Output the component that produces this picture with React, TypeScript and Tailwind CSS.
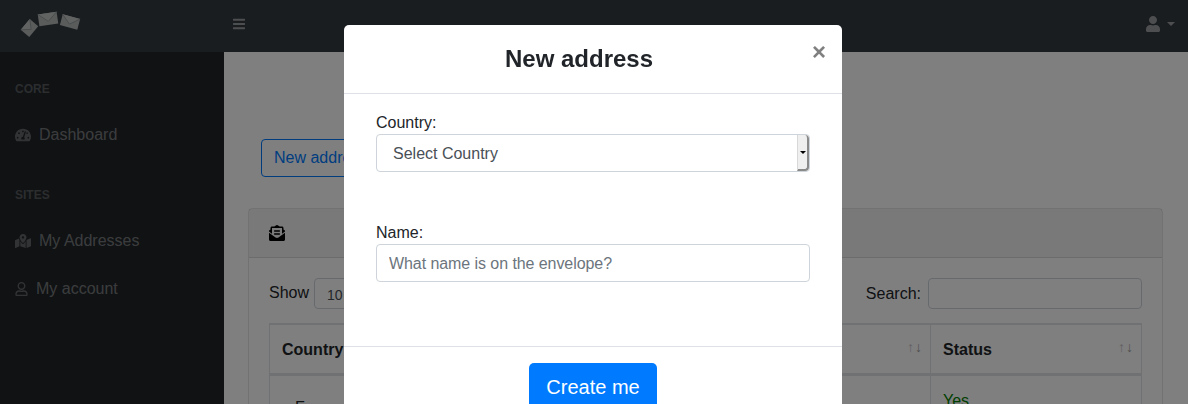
import { FaBars, FaEnvelopeOpenText, FaMapMarkedAlt, FaRegUser, FaTachometerAlt, FaUser } from 'react-icons/fa'

function Logo() {
  const envelopes = [
    { x: 29.5, y: 28, w: 14, h: 11, r: -50 },
    { x: 48, y: 19, w: 19, h: 12, r: -8 },
    { x: 70, y: 22, w: 18, h: 11, r: 15 },
  ]
  return (
    <svg width="100" height="52" viewBox="0 0 100 52" className="absolute left-0 top-0">
      {envelopes.map((e) => (
        <g key={e.x} transform={`translate(${e.x} ${e.y}) rotate(${e.r})`}>
          <rect x={-e.w / 2} y={-e.h / 2} width={e.w} height={e.h} fill="#b4b9b9" />
          <path d={`M${-e.w / 2} ${-e.h / 2}L0 ${e.h * 0.2}L${e.w / 2} ${-e.h / 2}Z`} fill="#c2c6c6" />
          <path d={`M${-e.w / 2} ${-e.h / 2}L0 ${e.h * 0.2}L${e.w / 2} ${-e.h / 2}`} fill="none" stroke="#8f9595" strokeWidth="0.8" />
        </g>
      ))}
    </svg>
  )
}

function SortArrows() {
  return (
    <span className="absolute right-[8px] top-[13px] flex gap-px text-[14px] leading-[18px]">
      <span className="text-[#c4c4c4]">↑</span>
      <span className="text-[#a0a0a0]">↓</span>
    </span>
  )
}

function Sidebar() {
  return (
    <aside className="w-[224px] shrink-0 bg-[#212529] text-white/40 text-[16px]">
      <div className="px-[15px] pt-7 pb-[13px] text-[12px] leading-[18px] font-bold text-white/25">CORE</div>
      <a className="flex items-center gap-2 h-12 px-[15px]">
        <FaTachometerAlt className="w-4 h-4 text-white/30" />
        Dashboard
      </a>
      <div className="px-[15px] pt-[27px] pb-[13px] text-[12px] leading-[18px] font-bold text-white/25">SITES</div>
      <a className="flex items-center gap-2 h-12 px-[15px]">
        <FaMapMarkedAlt className="w-4 h-4 text-white/30" />
        My Addresses
      </a>
      <a className="flex items-center gap-2 h-12 px-[15px]">
        <FaRegUser className="w-[13px] h-[14px] text-white/30" />
        My account
      </a>
    </aside>
  )
}

function Content() {
  return (
    <main className="flex-1 bg-white pt-[87px] pl-6 pr-[25px] text-[#212529] text-[16px]">
      <button className="ml-[13px] h-[38px] px-3 border border-[#007bff] rounded text-[#007bff]">New address</button>
      <section className="mt-[31px] border border-black/10 rounded">
        <div className="h-[49px] pl-5 flex items-center bg-black/5 border-b border-black/10">
          <FaEnvelopeOpenText className="w-4 h-4 text-black" />
        </div>
        <div className="p-5">
          <div className="flex items-center justify-between h-[31px]">
            <div className="flex items-center gap-[5px]">
              <span className="pb-[2px]">Show</span>
              <div className="w-[60px] h-[31px] border border-[#ced4da] rounded pl-[12px] text-[14px] leading-[33px] text-[#495057]">10</div>
            </div>
            <div className="flex items-center gap-[7px]">
              Search:
              <input className="w-[214px] h-[31px] border border-[#ced4da] rounded" />
            </div>
          </div>
          <table className="mt-[14px] w-[873px] table-fixed border-collapse">
            <thead>
              <tr className="h-[50px] text-left">
                <th className="w-[330px] border-x border-t-2 border-b-[3px] border-[#dee2e6] px-3 pt-[2px] font-bold">Country</th>
                <th className="relative w-[331px] border-x border-t-2 border-b-[3px] border-[#dee2e6] px-3 pt-[2px] font-bold">
                  Name
                  <SortArrows />
                </th>
                <th className="relative border-x border-t-2 border-b-[3px] border-[#dee2e6] px-3 pt-[2px] font-bold">
                  Status
                  <SortArrows />
                </th>
              </tr>
            </thead>
            <tbody>
              <tr>
                <td className="border-x border-[#dee2e6] pl-[25px] pt-5 align-top">France</td>
                <td className="border-x border-[#dee2e6] px-3 pt-[13px] align-top">Home</td>
                <td className="border-x border-[#dee2e6] px-3 pt-[13px] align-top text-[#008000]">Yes</td>
              </tr>
            </tbody>
          </table>
        </div>
      </section>
    </main>
  )
}

function AddressModal() {
  return (
    <div className="fixed inset-0 bg-black/50 flex justify-center pt-[25px] pr-[2px] overflow-hidden">
      <div className="w-[498px] h-[400px] shrink-0 bg-white rounded-[5px] text-[#212529] text-[16px]">
        <div className="relative h-[69px] border-b border-[#dee2e6] flex items-center justify-center pr-7">
          <h2 className="text-[24px] font-bold leading-9">New address</h2>
          <span className="absolute right-[16px] top-[9px] text-[24px] font-bold leading-9 text-[#808080]">×</span>
        </div>
        <div className="h-[252px] px-8 pt-4">
          <label className="block h-6 leading-[26px]">Country:</label>
          <div className="relative h-[38px] border border-[#ced4da] rounded flex items-center pl-4 pt-[2px] text-[#495057]">
            Select Country
            <div className="absolute right-0 top-0 w-3 h-[36px] flex items-center justify-center bg-[#efefef] border-l border-l-[#d8d8d8] border-r-2 border-b-2 border-r-[#8a8a8a] border-b-[#8a8a8a] rounded-r-sm">
              <span className="border-x-[3px] border-t-[3px] border-x-transparent border-t-black" />
            </div>
          </div>
          <label className="block mt-12 h-6 leading-[26px]">Name:</label>
          <input
            className="w-full h-[38px] border border-[#ced4da] rounded px-3 pt-[2px] placeholder:text-[#6c757d] placeholder:tracking-[-0.07px] text-[#495057]"
            placeholder="What name is on the envelope?"
          />
        </div>
        <div className="border-t border-[#dee2e6] pt-4 flex justify-center">
          <button className="w-[128px] h-12 bg-[#007bff] text-white text-[20px] rounded-[5px]">Create me</button>
        </div>
      </div>
    </div>
  )
}

export default function App() {
  return (
    <div className="h-[404px] overflow-hidden flex flex-col font-['Liberation_Sans',Arial,sans-serif]">
      <header className="relative h-[52px] shrink-0 bg-[#343a40] flex items-center justify-between pl-[233px] pr-[13px] pb-1 text-white/50">
        <Logo />
        <FaBars className="w-3 h-[14px]" />
        <div className="flex items-center gap-[7px]">
          <FaUser className="w-[14px] h-4" />
          <span className="border-x-4 border-t-4 border-x-transparent border-t-white/50" />
        </div>
      </header>
      <div className="flex flex-1">
        <Sidebar />
        <Content />
      </div>
      <AddressModal />
    </div>
  )
}
